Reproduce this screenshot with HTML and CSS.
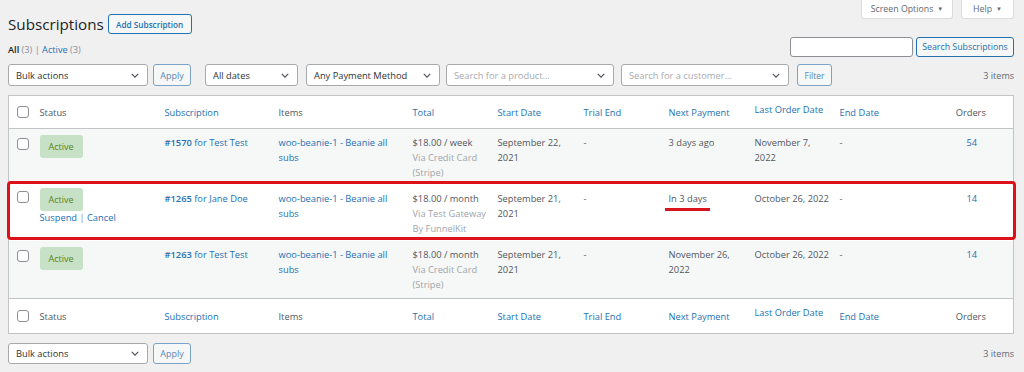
FILE: index.html
```html
<!DOCTYPE html>
<html lang="en">

<head>
    <meta charset="UTF-8">
    <meta name="viewport" content="width=device-width, initial-scale=1.0">
    <title>Subscriptions</title>
    <link rel="stylesheet" href="styles.css">
</head>

<body>
    <div class="page">
        <div class="page-head">
            <div class="title-group">
                <h1>Subscriptions</h1>
                <a class="btn title-btn" href="javascript:;">Add Subscription</a>
            </div>
            <div class="meta-tabs">
                <a class="meta-tab tab-options" href="javascript:;">Screen Options <span class="caret">&#9660;</span></a>
                <a class="meta-tab tab-help" href="javascript:;">Help <span class="caret">&#9660;</span></a>
            </div>
        </div>

        <div class="views-row">
            <div class="views">
                <b>All</b> <span class="count">(3)</span> <span class="sep">|</span>
                <a href="javascript:;">Active</a> <span class="count">(3)</span>
            </div>
            <div class="search-box">
                <input class="search-input" type="text">
                <a class="btn" href="javascript:;">Search Subscriptions</a>
            </div>
        </div>

        <div class="tablenav">
            <div class="select w-bulk"><span>Bulk actions</span><svg viewBox="0 0 10 6"><polyline points="1,1 5,5 9,1"/></svg></div>
            <a class="btn btn-small" href="javascript:;">Apply</a>
            <div class="select w-dates"><span>All dates</span><svg viewBox="0 0 10 6"><polyline points="1,1 5,5 9,1"/></svg></div>
            <div class="select w-pay"><span>Any Payment Method</span><svg viewBox="0 0 10 6"><polyline points="1,1 5,5 9,1"/></svg></div>
            <div class="select w-product placeholder"><span>Search for a product&hellip;</span><svg viewBox="0 0 10 6"><polyline points="1,1 5,5 9,1"/></svg></div>
            <div class="select w-customer placeholder"><span>Search for a customer&hellip;</span><svg viewBox="0 0 10 6"><polyline points="1,1 5,5 9,1"/></svg></div>
            <a class="btn btn-small btn-filter" href="javascript:;">Filter</a>
            <span class="items-count">3 items</span>
        </div>

        <div class="table-wrap">
            <table class="list">
                <colgroup>
                    <col style="width:27px">
                    <col style="width:125px">
                    <col style="width:114px">
                    <col style="width:134px">
                    <col style="width:85px">
                    <col style="width:86px">
                    <col style="width:85px">
                    <col style="width:86px">
                    <col style="width:85px">
                    <col style="width:85px">
                    <col>
                </colgroup>
                <thead>
                    <tr>
                        <th class="cb"><span class="check"></span></th>
                        <th>Status</th>
                        <th class="sortable">Subscription</th>
                        <th>Items</th>
                        <th class="sortable">Total</th>
                        <th class="sortable">Start Date</th>
                        <th class="sortable">Trial End</th>
                        <th class="sortable">Next Payment</th>
                        <th class="sortable raised">Last Order Date</th>
                        <th class="sortable">End Date</th>
                        <th class="num">Orders</th>
                    </tr>
                </thead>
                <tbody>
                    <tr class="alt row-1">
                        <td class="cb"><span class="check"></span></td>
                        <td><span class="badge">Active</span></td>
                        <td><a href="javascript:;"><b>#1570</b> for Test Test</a></td>
                        <td><a href="javascript:;">woo-beanie-1 - Beanie all subs</a></td>
                        <td>$18.00 / week<div class="muted">Via Credit Card (Stripe)</div></td>
                        <td>September 22, 2021</td>
                        <td class="dash">-</td>
                        <td>3 days ago</td>
                        <td>November 7, 2022</td>
                        <td class="dash">-</td>
                        <td class="num"><a href="javascript:;">54</a></td>
                    </tr>
                    <tr class="row-2">
                        <td class="cb"><span class="check"></span></td>
                        <td><span class="badge">Active</span>
                            <div class="row-actions"><a href="javascript:;">Suspend</a> <span class="sep">|</span> <a href="javascript:;">Cancel</a></div>
                        </td>
                        <td><a href="javascript:;"><b>#1265</b> for Jane Doe</a></td>
                        <td><a href="javascript:;">woo-beanie-1 - Beanie all subs</a></td>
                        <td>$18.00 / month<div class="muted">Via Test Gateway<br>By FunnelKit</div></td>
                        <td>September 21, 2021</td>
                        <td class="dash dark">-</td>
                        <td><span class="marked">In 3 days</span></td>
                        <td class="nowrap">October 26, 2022</td>
                        <td class="dash dark">-</td>
                        <td class="num"><a href="javascript:;">14</a></td>
                    </tr>
                    <tr class="alt row-3">
                        <td class="cb"><span class="check"></span></td>
                        <td><span class="badge">Active</span></td>
                        <td><a href="javascript:;"><b>#1263</b> for Test Test</a></td>
                        <td><a href="javascript:;">woo-beanie-1 - Beanie all subs</a></td>
                        <td>$18.00 / month<div class="muted">Via Credit Card (Stripe)</div></td>
                        <td>September 21, 2021</td>
                        <td class="dash">-</td>
                        <td>November 26, 2022</td>
                        <td class="nowrap">October 26, 2022</td>
                        <td class="dash">-</td>
                        <td class="num"><a href="javascript:;">14</a></td>
                    </tr>
                </tbody>
                <tfoot>
                    <tr>
                        <th class="cb"><span class="check"></span></th>
                        <th>Status</th>
                        <th class="sortable">Subscription</th>
                        <th>Items</th>
                        <th class="sortable">Total</th>
                        <th class="sortable">Start Date</th>
                        <th class="sortable">Trial End</th>
                        <th class="sortable">Next Payment</th>
                        <th class="sortable raised">Last Order Date</th>
                        <th class="sortable">End Date</th>
                        <th class="num">Orders</th>
                    </tr>
                </tfoot>
            </table>
            <!-- annotation drawn over the highlighted row -->
            <div class="highlight"></div>
        </div>

        <div class="tablenav bottom">
            <div class="select w-bulk"><span>Bulk actions</span><svg viewBox="0 0 10 6"><polyline points="1,1 5,5 9,1"/></svg></div>
            <a class="btn btn-small" href="javascript:;">Apply</a>
            <span class="items-count">3 items</span>
        </div>
    </div>
</body>

</html>
```

FILE: styles.css
```css
* {
    margin: 0;
    padding: 0;
    box-sizing: border-box;
}

body {
    background-color: #f0f0f1;
    font-family: "Open Sans", "Noto Sans", sans-serif;
    font-size: 9.3px;
    color: #50575e;
}

a {
    color: #2271b1;
    text-decoration: none;
}

.page {
    padding: 0 10px 0 8px;
}

/* header */
.page-head {
    display: flex;
    align-items: flex-start;
    height: 34px;
}

.title-group {
    display: flex;
    align-items: center;
    gap: 4px;
    margin-top: 13px;
}

h1 {
    font-size: 15.2px;
    font-weight: 400;
    color: #1d2327;
    line-height: 22px;
}

.btn {
    display: inline-flex;
    align-items: center;
    justify-content: center;
    height: 20px;
    padding: 0 7px;
    border: 1px solid #2271b1;
    border-radius: 3px;
    background-color: #f6f7f7;
    color: #2271b1;
    font-size: 8.8px;
    white-space: nowrap;
}

.title-btn {
    width: 84px;
    font-size: 8.2px;
    font-weight: 600;
    padding: 0;
}

.meta-tabs {
    margin-left: auto;
    display: flex;
    gap: 8px;
}

.meta-tab {
    display: flex;
    align-items: center;
    justify-content: center;
    height: 19px;
    background-color: #fff;
    border: 1px solid #dcdcde;
    border-top: none;
    border-radius: 0 0 3px 3px;
    color: #646970;
    font-size: 8.8px;
    gap: 4px;
}

.tab-options {
    width: 92px;
}

.tab-help {
    width: 53px;
}

.caret {
    font-size: 6px;
}

/* views + search */
.views-row {
    display: flex;
    justify-content: space-between;
    align-items: flex-start;
    margin-top: 3px;
    height: 20px;
}

.views {
    font-size: 9.2px;
    color: #50575e;
    padding-top: 6px;
}

.views b {
    color: #1d2327;
    font-weight: 600;
}

.count,
.sep {
    color: #8c8f94;
}

.search-box {
    display: flex;
    gap: 3px;
}

.search-input {
    width: 123px;
    height: 20px;
    border: 1px solid #8c8f94;
    border-radius: 3px;
    background-color: #fff;
}

.search-box .btn {
    width: 98px;
    padding: 0;
}

/* filter bar */
.tablenav {
    display: flex;
    align-items: center;
    height: 22px;
    margin-top: 7px;
    margin-bottom: 9px;
}

.tablenav.bottom {
    margin-top: 9px;
    height: 21px;
}

.select {
    display: flex;
    align-items: center;
    justify-content: space-between;
    height: 100%;
    padding: 0 8px 0 7px;
    background-color: #fff;
    border: 1px solid #a7aaad;
    border-radius: 3px;
    color: #2c3338;
    font-size: 9.3px;
}

.select svg {
    width: 8px;
    height: 5px;
    fill: none;
    stroke: #50575e;
    stroke-width: 1.6;
}

.placeholder span {
    color: #a7aaad;
}

.w-bulk {
    width: 140px;
}

.w-dates {
    width: 93px;
    margin-left: 14px;
}

.w-pay {
    width: 134px;
    margin-left: 8px;
}

.w-product {
    width: 168px;
    margin-left: 6px;
}

.w-customer {
    width: 168px;
    margin-left: 7px;
}

.btn-small {
    height: 100%;
    margin-left: 5px;
    width: 38px;
    padding: 0;
    border-color: #7ba3c9;
    color: #5b87b4;
    font-size: 9px;
}

.btn-filter {
    margin-left: 8px;
    width: 35px;
    font-size: 8.5px;
}

.items-count {
    margin-left: auto;
    color: #646970;
    font-size: 9px;
}

/* table */
.table-wrap {
    position: relative;
}

.list {
    width: 1006px;
    table-layout: fixed;
    border-collapse: collapse;
    background-color: #fff;
    border: 1px solid #c3c4c7;
    line-height: 15px;
}

.list th {
    height: 33px;
    text-align: left;
    font-weight: 400;
    color: #50575e;
    padding: 0 4px;
    vertical-align: middle;
}

.list thead th {
    border-bottom: 1px solid #c3c4c7;
}

.list tfoot th {
    border-top: 1px solid #c3c4c7;
    height: 35px;
}

.list th.sortable {
    color: #2271b1;
}

.list th.raised {
    vertical-align: top;
    padding-top: 6px;
}

.list .num {
    text-align: center;
    padding-left: 12px;
}

.list td {
    vertical-align: top;
    padding: 6px 2px 0 4px;
    color: #50575e;
}

.list td.nowrap {
    white-space: nowrap;
}

.row-1 td {
    height: 53px;
}

.row-2 td {
    height: 59px;
    padding-top: 9px;
}

.row-3 td {
    height: 58px;
    padding-top: 6px;
}

.list tr.alt td {
    background-color: #f6f7f7;
}

.list .cb {
    padding-left: 8px;
    padding-right: 0;
}

.list td.cb {
    padding-top: 9px;
}

.row-2 td.cb {
    padding-top: 9px;
}

.check {
    display: block;
    width: 12px;
    height: 12px;
    border: 1px solid #8c8f94;
    border-radius: 3px;
    background-color: #fff;
}

.badge {
    display: inline-flex;
    align-items: center;
    justify-content: center;
    width: 43px;
    height: 23px;
    border-radius: 3px;
    background-color: #c6e1c6;
    color: #5b841b;
    font-size: 9px;
}

.row-2 .badge {
    margin-top: -3px;
}

.row-actions {
    margin-top: -1px;
}

.list td b {
    font-weight: 600;
}

.muted {
    color: #a0a5aa;
}

.dash {
    color: #a7aaad;
}

.dash.dark {
    color: #50575e;
}

.marked {
    position: relative;
}

.marked::after {
    content: "";
    position: absolute;
    left: -4px;
    right: -3px;
    bottom: -6px;
    height: 3px;
    background-color: #d8141c;
}

.highlight {
    position: absolute;
    left: -1px;
    top: 86px;
    width: 1009px;
    height: 59px;
    border: 3px solid #dd1119;
    border-radius: 4px;
    pointer-events: none;
}
```
